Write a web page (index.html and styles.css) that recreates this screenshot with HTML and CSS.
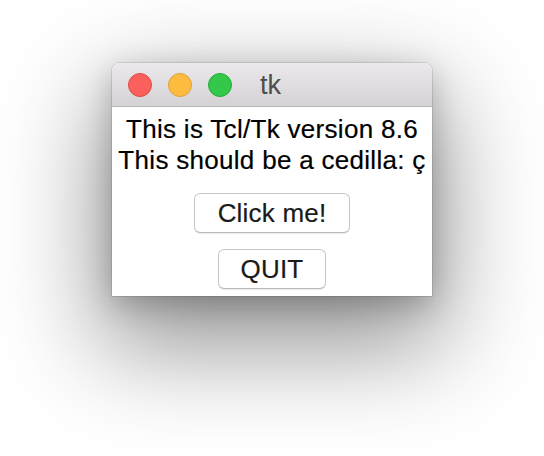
FILE: index.html
```html
<!DOCTYPE html>
<html>
<head>
<meta charset="utf-8">
<link rel="stylesheet" href="styles.css">
</head>
<body>
<div class="window">
  <div class="titlebar">
    <span class="light red"></span>
    <span class="light yellow"></span>
    <span class="light green"></span>
    <span class="title">tk</span>
  </div>
  <div class="content">
    <div class="label">This is Tcl/Tk version 8.6</div>
    <div class="label">This should be a cedilla: ç</div>
    <button class="btn btn-click">Click me!</button>
    <button class="btn btn-quit">QUIT</button>
  </div>
</div>
</body>
</html>
```

FILE: styles.css
```css
html, body {
  margin: 0;
  padding: 0;
  background: #ffffff;
}
body {
  width: 544px;
  height: 456px;
  overflow: hidden;
  padding-top: 63px;
  box-sizing: border-box;
  font-family: "Liberation Sans", Arial, sans-serif;
}
.window {
  width: 320px;
  height: 233px;
  margin: 0 auto;
  background: #ffffff;
  border-radius: 8px 8px 0 0;
  box-shadow: 0 0 0 1px rgba(0,0,0,0.1), 0 8px 30px rgba(0,0,0,0.22), 0 40px 100px 12px rgba(0,0,0,0.42);
  display: flex;
  flex-direction: column;
}
.titlebar {
  height: 43px;
  border-bottom: 1px solid #b6b4b6;
  border-radius: 8px 8px 0 0;
  background: linear-gradient(#ebe9eb, #d4d2d4);
  display: flex;
  align-items: center;
  padding-left: 16px;
  gap: 16px;
  flex-shrink: 0;
}
.light {
  width: 22px;
  height: 22px;
  border-radius: 50%;
  display: block;
}
.red { background: #fc605c; border: 1px solid #de4b46; }
.yellow { background: #fdbc40; border: 1px solid #dea236; }
.green { background: #34c84a; border: 1px solid #27aa35; }
.title {
  margin-left: 12px;
  font-size: 27px;
  color: #4d4d4d;
  line-height: 1;
  margin-top: 2px;
}
.content {
  display: flex;
  flex-direction: column;
  align-items: center;
  padding-top: 7px;
}
.label {
  font-size: 26px;
  line-height: 31px;
  letter-spacing: 0.3px;
  color: #000;
  white-space: nowrap;
  -webkit-text-stroke: 0.2px #000;
}
.btn {
  font-family: "Liberation Sans", Arial, sans-serif;
  font-size: 26px;
  line-height: 38px;
  height: 40px;
  color: #1a1a1a;
  background: #ffffff;
  border: 1px solid #c9c9c9;
  border-bottom-color: #b9b9b9;
  border-radius: 6px;
  box-shadow: 0 1px 1px rgba(0,0,0,0.08);
  padding: 0;
  text-align: center;
  letter-spacing: 0.2px;
  -webkit-text-stroke: 0.2px #1a1a1a;
}
.btn-click {
  width: 156px;
  margin-top: 17px;
}
.btn-quit {
  width: 108px;
  margin-top: 16px;
}
```
